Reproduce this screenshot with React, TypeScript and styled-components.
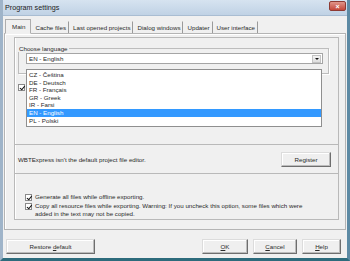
import React from 'react';
import styled, { createGlobalStyle } from 'styled-components';

const GlobalStyle = createGlobalStyle`
  html, body {
    margin: 0;
    padding: 0;
    background: #f0f0f0;
  }
  * {
    box-sizing: border-box;
  }
`;

const languages = ['CZ - Čeština', 'DE - Deutsch', 'FR - Français', 'GR - Greek', 'IR - Farsi', 'EN - English', 'PL - Polski'];
const tabs = ['Main', 'Cache files', 'Last opened projects', 'Dialog windows', 'Updater', 'User interface'];

const Window = styled.div`
  width: 350px;
  height: 261px;
  display: flex;
  flex-direction: column;
  background: #f0f0f0;
  border-left: 3px solid #9fb4c9;
  border-right: 3px solid #5d8aa4;
  border-bottom: 3px solid #2d6b7c;
  font-family: 'Liberation Sans', Arial, sans-serif;
  font-size: 6.2px;
  color: #2a2a2a;
  overflow: hidden;
`;

const TitleBar = styled.div`
  height: 16px;
  flex: none;
  display: flex;
  align-items: center;
  justify-content: space-between;
  padding: 0 1px 0 2px;
  margin: 0 -3px 0 -3px;
  background: linear-gradient(#d6e3f0, #c0d2e5);
  border-bottom: 1px solid #a9bdd2;
`;

const Title = styled.span`
  font-size: 7.2px;
  color: #222;
  padding-left: 3px;
`;

const CloseButton = styled.div`
  width: 17px;
  height: 10px;
  margin-right: 3px;
  margin-top: -3px;
  border-radius: 2px;
  background: linear-gradient(#e0958a, #c5473a);
  border: 1px solid #8e3a33;
  display: flex;
  align-items: center;
  justify-content: center;
  color: #fff;
  font-size: 7px;
  font-weight: bold;
  line-height: 1;
`;

const Client = styled.div`
  flex: 1;
  display: flex;
  flex-direction: column;
  padding: 2px 1px 0 1px;
`;

const TabStrip = styled.div`
  display: flex;
  align-items: flex-end;
  height: 15px;
  padding-left: 1px;
  position: relative;
  z-index: 1;
`;

const Tab = styled.div<{ $active?: boolean }>`
  height: ${(p) => (p.$active ? '15px' : '12px')};
  display: flex;
  align-items: center;
  padding: ${(p) => (p.$active ? '0 5px 0 6px' : '0 2px 0 3px')};
  margin-bottom: ${(p) => (p.$active ? '-1px' : '0')};
  background: #f0f0f0;
  border: 1px solid ${(p) => (p.$active ? '#adadad' : 'transparent')};
  border-bottom: ${(p) => (p.$active ? '1px solid #f0f0f0' : '0')};
  border-right: 1px solid ${(p) => (p.$active ? '#adadad' : '#9a9a9a')};
  white-space: nowrap;
`;

const Panel = styled.div`
  height: 197px;
  border: 1px solid #b4b4b4;
  box-shadow: inset 1px 1px 0 #fff;
  padding: 3px 6px 9px 9px;
  display: flex;
  flex-direction: column;
`;

const Section = styled.div<{ $h: number }>`
  height: ${(p) => p.$h}px;
  border: 1px solid #b9b9b9;
  border-top: 0;
  box-shadow: inset 1px 0 0 #fff;
  position: relative;
  &:first-child {
    border-top: 1px solid #b9b9b9;
  }
`;

const LanguageGroup = styled.fieldset`
  margin: 7px 9px 0 3px;
  height: 29px;
  padding: 0 5px 0 7px;
  border: 1px solid #bdbdbd;
  box-shadow: 1px 1px 0 #fff;
  border-radius: 0;
  legend {
    padding: 0 1px;
    margin-left: -8px;
    font-size: 6.2px;
    line-height: 7px;
  }
`;

const Combo = styled.div`
  height: 11px;
  margin-top: 1px;
  border: 1px solid #a5a5a5;
  background: #fff;
  display: flex;
  align-items: center;
  justify-content: space-between;
  padding-left: 2px;
`;

const ComboArrow = styled.div`
  width: 9px;
  height: 8px;
  margin-right: 1px;
  border: 1px solid #c3c3c3;
  background: linear-gradient(#f4f4f4, #dedede);
  display: flex;
  align-items: center;
  justify-content: center;
  &::after {
    content: '';
    border-left: 2px solid transparent;
    border-right: 2px solid transparent;
    border-top: 2px solid #111;
  }
`;

const DropList = styled.ul`
  position: absolute;
  left: 11px;
  top: 31px;
  width: 296px;
  margin: 0;
  padding: 1px 0 2px;
  list-style: none;
  background: #fff;
  border: 1px solid #8f8f8f;
  z-index: 2;
`;

const DropItem = styled.li<{ $selected?: boolean }>`
  height: 7.6px;
  line-height: 7.6px;
  padding-left: 2px;
  background: ${(p) => (p.$selected ? '#3399ff' : 'transparent')};
  color: ${(p) => (p.$selected ? '#fff' : '#2a2a2a')};
`;

const CheckRow = styled.div<{ $indent?: number }>`
  display: flex;
  align-items: flex-start;
  gap: 3px;
  padding-left: ${(p) => p.$indent ?? 10}px;
  line-height: 7.5px;
`;

const Box = styled.span`
  width: 7px;
  height: 7px;
  flex: none;
  margin-top: 1px;
  border: 1px solid #8a8a8a;
  background: #fff;
  position: relative;
  &::after {
    content: '';
    position: absolute;
    left: 1.5px;
    top: 0;
    width: 2px;
    height: 3.5px;
    border-right: 1px solid #111;
    border-bottom: 1px solid #111;
    transform: rotate(40deg);
  }
`;

const RegisterRow = styled.div`
  height: 100%;
  display: flex;
  align-items: center;
  justify-content: space-between;
  padding: 0 7px 0 3px;
`;

const Button = styled.div<{ $w: number }>`
  width: ${(p) => p.$w}px;
  height: 15px;
  display: flex;
  align-items: center;
  justify-content: center;
  background: #efefef;
  border: 1px solid #dcdcdc;
  border-right-color: #6e6e6e;
  border-bottom-color: #6e6e6e;
  box-shadow: inset -1px -1px 0 #bcbcbc, inset 1px 1px 0 #fff;
  u {
    text-decoration: underline;
  }
`;

const Options = styled.div`
  display: flex;
  flex-direction: column;
  gap: 1px;
  padding-top: 19px;
`;

const Footer = styled.div`
  display: flex;
  align-items: center;
  justify-content: space-between;
  padding: 9px 5px 0 2px;
`;

const ButtonGroup = styled.div`
  display: flex;
  gap: 5px;
`;

const App: React.FC = () => {
  return (
    <>
      <GlobalStyle />
      <Window>
        <TitleBar>
          <Title>Program settings</Title>
          <CloseButton>×</CloseButton>
        </TitleBar>
        <Client>
          <TabStrip>
            {tabs.map((t, i) => (
              <Tab key={t} $active={i === 0}>
                {t}
              </Tab>
            ))}
          </TabStrip>
          <Panel>
            <Section $h={108}>
              <LanguageGroup>
                <legend>Choose language</legend>
                <Combo>
                  <span>EN - English</span>
                  <ComboArrow />
                </Combo>
              </LanguageGroup>
              <CheckRow $indent={3} style={{ marginTop: 9 }}>
                <Box />
              </CheckRow>
              <DropList>
                {languages.map((l) => (
                  <DropItem key={l} $selected={l === 'EN - English'}>
                    {l}
                  </DropItem>
                ))}
              </DropList>
            </Section>
            <Section $h={29}>
              <RegisterRow>
                <span>WBTExpress isn't the default project file editor.</span>
                <Button $w={50}>Register</Button>
              </RegisterRow>
            </Section>
            <Section $h={46}>
              <Options>
                <CheckRow>
                  <Box />
                  <span>Generate all files while offline exporting.</span>
                </CheckRow>
                <CheckRow>
                  <Box />
                  <span>
                    Copy all resource files while exporting. Warning: If you uncheck this option, some files which were
                    <br />
                    added in the text may not be copied.
                  </span>
                </CheckRow>
              </Options>
            </Section>
          </Panel>
          <Footer>
            <Button $w={89}>
              <span>
                Restore <u>d</u>efault
              </span>
            </Button>
            <ButtonGroup>
              <Button $w={46}>
                <u>O</u>K
              </Button>
              <Button $w={44}>
                <span>
                  <u>C</u>ancel
                </span>
              </Button>
              <Button $w={39}>
                <span>
                  <u>H</u>elp
                </span>
              </Button>
            </ButtonGroup>
          </Footer>
        </Client>
      </Window>
    </>
  );
};

export default App;
